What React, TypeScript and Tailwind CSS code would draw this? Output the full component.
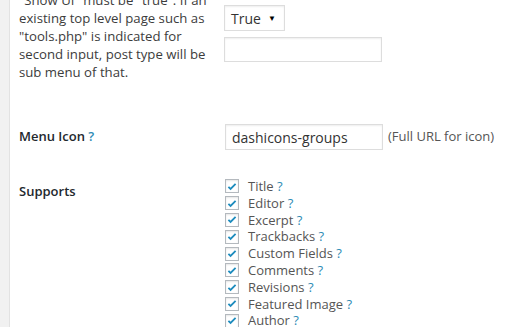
const supports = [
  'Title',
  'Editor',
  'Excerpt',
  'Trackbacks',
  'Custom Fields',
  'Comments',
  'Revisions',
  'Featured Image',
  'Author',
]

function Check() {
  return (
    <span className="flex h-[14px] w-[14px] shrink-0 items-center justify-center border border-[#b4b9be] bg-white shadow-[inset_0_1px_2px_rgba(0,0,0,0.1)]">
      <svg viewBox="0 0 20 20" className="h-[13px] w-[13px]">
        <path d="M4 10.5l3.6 3.6L16 5.5" fill="none" stroke="#1e8cbe" strokeWidth="3" />
      </svg>
    </span>
  )
}

export default function App() {
  return (
    <div className="flex h-[327px] w-[520px] overflow-hidden bg-white font-['Open_Sans',sans-serif] text-[13px] text-[#444]">
      <div className="w-[10px] shrink-0 border-r border-[#e2e2e2] bg-[#f1f1f1]" />
      <div className="flex-1 pl-[9px]">
        <div className="flex">
          <p className="-mt-[9px] w-[205px] shrink-0 text-[13.2px] leading-[18px] text-[#3c3c3c]">
            "Show UI" must be "true". If an existing top level page such as "tools.php" is indicated for second input, post type will be sub menu of that.
          </p>
          <div className="flex flex-col gap-[6px] pt-[5px]">
            <div className="flex h-[26px] w-[61px] items-center justify-between border border-[#ddd] pl-[6px] pr-[8px] text-[14px] text-[#333] shadow-[inset_0_1px_2px_rgba(0,0,0,0.07)]">
              <span>True</span>
              <span className="text-[8px] text-black">▼</span>
            </div>
            <div className="h-[25px] w-[158px] border border-[#ddd] shadow-[inset_0_1px_2px_rgba(0,0,0,0.07)]" />
          </div>
        </div>

        <div className="mt-[43px] flex items-center">
          <div className="w-[206px] shrink-0 font-semibold text-[#23282d]">
            Menu Icon <span className="text-[#2e8bb5]">?</span>
          </div>
          <div className="flex h-[26px] w-[158px] items-center border border-[#ddd] px-[6px] text-[14px] text-[#333] shadow-[inset_0_1px_2px_rgba(0,0,0,0.07)]">
            dashicons-groups
          </div>
          <span className="ml-[5px] text-[13px] text-[#555]">(Full URL for icon)</span>
        </div>

        <div className="mt-[28px] flex">
          <div className="w-[206px] shrink-0 pt-[4px] font-semibold text-[#23282d]">Supports</div>
          <ul className="flex flex-col">
            {supports.map((s) => (
              <li key={s} className="flex h-[16.8px] items-center gap-[9px] text-[13px] leading-[16.8px] text-[#555]">
                <Check />
                <span>
                  {s} <span className="text-[#2e8bb5]">?</span>
                </span>
              </li>
            ))}
          </ul>
        </div>
      </div>
    </div>
  )
}
